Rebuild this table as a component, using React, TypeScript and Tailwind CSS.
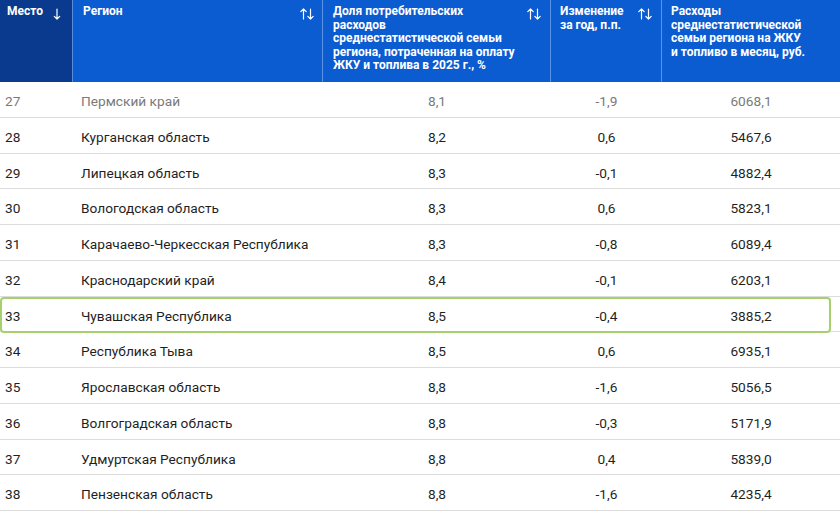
import React from "react";

const rows = [
  ["27", "Пермский край", "8,1", "-1,9", "6068,1"],
  ["28", "Курганская область", "8,2", "0,6", "5467,6"],
  ["29", "Липецкая область", "8,3", "-0,1", "4882,4"],
  ["30", "Вологодская область", "8,3", "0,6", "5823,1"],
  ["31", "Карачаево-Черкесская Республика", "8,3", "-0,8", "6089,4"],
  ["32", "Краснодарский край", "8,4", "-0,1", "6203,1"],
  ["33", "Чувашская Республика", "8,5", "-0,4", "3885,2"],
  ["34", "Республика Тыва", "8,5", "0,6", "6935,1"],
  ["35", "Ярославская область", "8,8", "-1,6", "5056,5"],
  ["36", "Волгоградская область", "8,8", "-0,3", "5171,9"],
  ["37", "Удмуртская Республика", "8,8", "0,4", "5839,0"],
  ["38", "Пензенская область", "8,8", "-1,6", "4235,4"],
];

function SortIcon() {
  return (
    <svg width="14" height="12" viewBox="0 0 14 12" fill="none" stroke="white" strokeWidth="1.2" strokeLinecap="round" strokeLinejoin="round">
      <path d="M3.5 11V1M0.8 3.7L3.5 1L6.2 3.7" />
      <path d="M10.5 1V11M7.8 8.3L10.5 11L13.2 8.3" />
    </svg>
  );
}

function DownIcon() {
  return (
    <svg width="8" height="12" viewBox="0 0 8 12" fill="none" stroke="white" strokeWidth="1.2" strokeLinecap="round" strokeLinejoin="round">
      <path d="M4 1V11M1.3 8.3L4 11L6.7 8.3" />
    </svg>
  );
}

export default function App() {
  return (
    <div className="w-[840px] h-[512px] overflow-hidden bg-white" style={{ fontFamily: "Roboto, 'Liberation Sans', sans-serif" }}>
      <div className="grid grid-cols-[73px_250px_228px_111px_178px] h-[82px] text-white text-[12px] leading-[13.6px] font-bold">
        <div className="bg-[#0a3a8e] border-r border-[#5a8ad8] pl-[7px] pr-[11px] pt-[5px] flex justify-between items-start">
          <span>Место</span>
          <span className="mt-[3px]"><DownIcon /></span>
        </div>
        <div className="bg-[#0b5bd1] border-r border-[#5b94e6] pl-[10px] pr-[8px] pt-[5px] flex justify-between items-start">
          <span>Регион</span>
          <span className="mt-[3px]"><SortIcon /></span>
        </div>
        <div className="bg-[#0b5bd1] border-r border-[#5b94e6] pl-[10px] pr-[9px] pt-[5px] flex justify-between items-start">
          <span>
            Доля потребительских<br />расходов<br />среднестатистической семьи<br />региона, потраченная на оплату<br />ЖКУ и топлива в 2025 г., %
          </span>
          <span className="mt-[3px]"><SortIcon /></span>
        </div>
        <div className="bg-[#0b5bd1] border-r border-[#5b94e6] pl-[9px] pr-[9px] pt-[5px] flex justify-between items-start">
          <span>
            Изменение<br />за год, п.п.
          </span>
          <span className="mt-[3px]"><SortIcon /></span>
        </div>
        <div className="bg-[#0b5bd1] pl-[9px] pt-[5px]">
          <span>
            Расходы<br />среднестатистической<br />семьи региона на ЖКУ<br />и топливо в месяц, руб.
          </span>
        </div>
      </div>
      {rows.map((r, i) => (
        <div
          key={r[0]}
          className={
            "relative grid grid-cols-[73px_250px_228px_111px_178px] h-[35.75px] items-center pt-[4px] border-b border-[#dcdcdc] text-[13.7px] " +
            (i === 0 ? "text-[#7a7a7a]" : "text-[#1f1f1f]")
          }
        >
          <div className="pl-[5px]">{r[0]}</div>
          <div className="pl-[8px]">{r[1]}</div>
          <div className="text-center">{r[2]}</div>
          <div className="text-center">{r[3]}</div>
          <div className="text-center">{r[4]}</div>
          {r[0] === "33" && (
            <div className="absolute left-0 top-[0px] w-[831px] h-[36px] border-2 border-[#a6d06b] rounded-[4px]" />
          )}
        </div>
      ))}
    </div>
  );
}
